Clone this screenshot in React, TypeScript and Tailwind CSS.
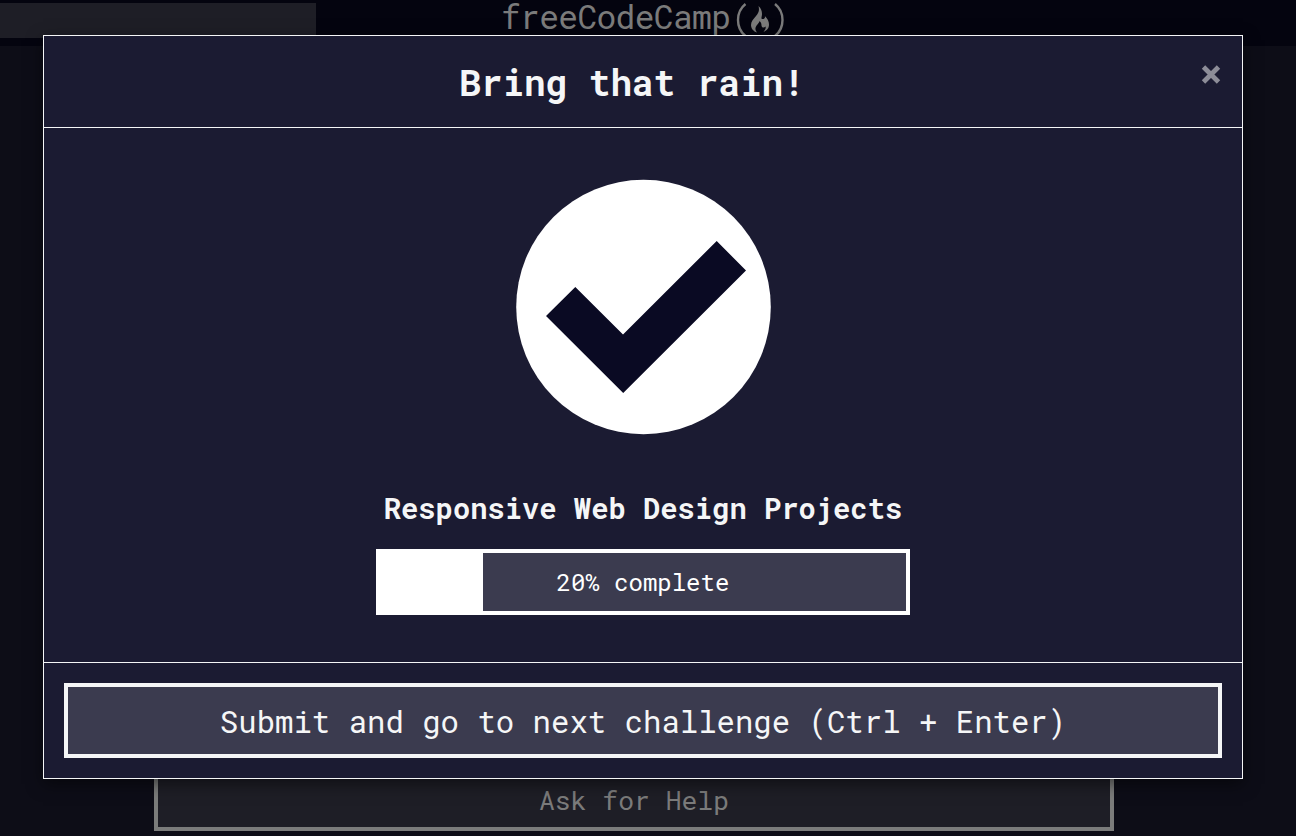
const mono = "font-['Roboto_Mono','DejaVu_Sans_Mono','Liberation_Mono',monospace]";

function FlameMark() {
  return (
    <svg viewBox="0 0 54 36" className="ml-[2px] h-9 w-[54px]" aria-hidden="true">
      <path d="M13.500 4C3.500 12 3.500 28 13.500 36M43 4C53 12 53 28 43 36" fill="none" stroke="currentColor" strokeWidth="2.400" />
      <path fill="currentColor" d="M26.500 6C29 8 30 11 30 14C30 17 28.500 18.500 30.500 19C32.500 19 33.500 17.500 32.800 16C35.500 18.500 37 21.500 37 24.500C37 28 35.500 30 31.500 32C33.500 29.500 34 28 33.500 26.500C32 28.500 29.500 27.500 29.500 25.500C29.500 23.500 29 22.500 27.500 21C27.500 23 24 25 23.500 28C23.200 30 24 31 25 32.500C21.500 31.500 19 28.500 19 25C19 21.500 21.500 19 24 16C27 12.500 27.500 10 26.500 6Z" />
    </svg>
  );
}

function PageBehind() {
  return (
    <div className="flex h-full flex-col bg-[#0d0d17]">
      <header className="flex h-[46px] shrink-0 items-start bg-[#04040f]">
        <div className="mt-[3px] h-[35px] w-[316px] bg-[#1e1e26]" />
        <div className="ml-[185px] flex items-start text-[#7b7b7b]">
          <span className="text-[33px] leading-[32px] font-normal tracking-[-0.7px]">freeCodeCamp</span>
          <FlameMark />
        </div>
      </header>
      <main className="flex grow flex-col justify-end pr-[182px] pb-[5px] pl-[154px]">
        <button className="flex h-[74px] items-center justify-center border-4 border-[#7b7c7b] bg-[#1e1e26] pt-[12px] text-[26.4px] leading-9 text-[#7b7b7b]">
          Ask for Help
        </button>
      </main>
    </div>
  );
}

function CheckMark() {
  return (
    <svg viewBox="0 0 256 256" className="size-64" aria-hidden="true">
      <circle cx="128.500" cy="128" r="127.300" fill="#fff" />
      <path d="M31 137L60.300 108L108 155.500L201.700 62L231 91.500L108.200 214Z" fill="#0a0a23" />
    </svg>
  );
}

function CompletionModal() {
  return (
    <section className="absolute top-[35px] left-[43px] flex h-[744px] w-[1200px] flex-col border border-[#f5f6f7] bg-[#1b1b32] text-[#f5f6f7] shadow-[0_5px_15px_rgba(0,0,0,0.5)]">
      <div className="flex h-[92px] shrink-0 items-center border-b border-[#f5f6f7] pr-[21px] pl-[20px]">
        <h2 className="grow pr-px text-center text-[36px] leading-[50px] font-bold">Bring that rain!</h2>
        <button aria-label="Close" className="-mt-[15px] flex w-5 justify-center text-[#8d8d98]">
          <svg viewBox="0 0 20 20" className="size-5" stroke="currentColor" strokeWidth="4.800" aria-hidden="true">
            <path d="M2.500 3L17.500 18M17.500 3L2.500 18" />
          </svg>
        </button>
      </div>
      <div className="flex grow flex-col items-center pt-[51px]">
        <CheckMark />
        <h3 className="mt-[53px] text-[28.8px] leading-[41px] font-bold">Responsive Web Design Projects</h3>
        <div className="mt-5 flex h-[66px] w-[534px] items-center border-4 border-white bg-[#3b3b4f] text-white">
          <div className="h-full w-[103px] shrink-0 bg-white" />
          <span className="pl-[73.500px] text-[24px] leading-8">20% complete</span>
        </div>
      </div>
      <div className="h-[116px] shrink-0 border-t border-[#f5f6f7] p-5">
        <button className="flex h-[75px] w-full items-center justify-center border-4 border-[#f5f6f7] bg-[#3b3b4f] pt-px text-[30.67px] leading-10">
          Submit and go to next challenge (Ctrl + Enter)
        </button>
      </div>
    </section>
  );
}

export default function App() {
  return (
    <div className={`relative h-screen w-full overflow-hidden ${mono}`}>
      <PageBehind />
      <CompletionModal />
    </div>
  );
}
